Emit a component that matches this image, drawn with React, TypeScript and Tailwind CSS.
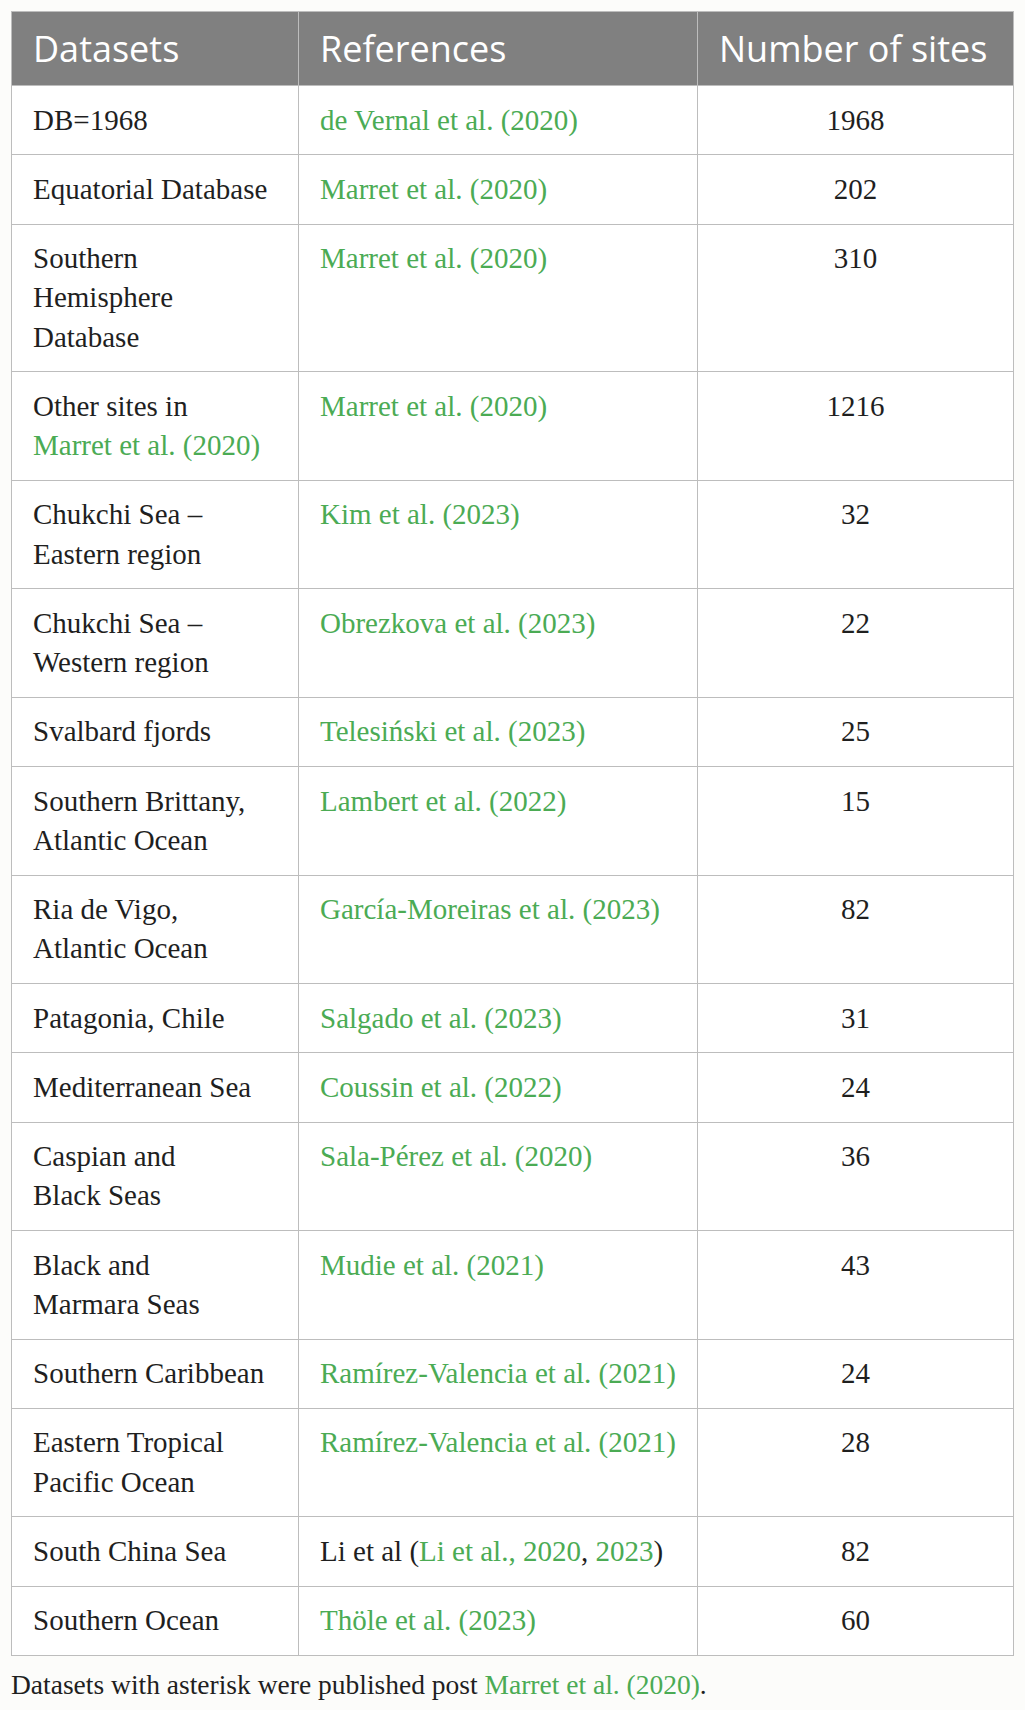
const serif = "font-['Liberation_Serif','Times_New_Roman',serif]";

type Cell = React.ReactNode;

const G = ({ children }: { children: React.ReactNode }) => (
  <span className="text-[#4bab54]">{children}</span>
);

const rows: [Cell, Cell, string][] = [
  ["DB=1968", <G>de Vernal et al. (2020)</G>, "1968"],
  ["Equatorial Database", <G>Marret et al. (2020)</G>, "202"],
  [<>Southern<br />Hemisphere<br />Database</>, <G>Marret et al. (2020)</G>, "310"],
  [<>Other sites in<br /><G>Marret et al. (2020)</G></>, <G>Marret et al. (2020)</G>, "1216"],
  [<>Chukchi Sea –<br />Eastern region</>, <G>Kim et al. (2023)</G>, "32"],
  [<>Chukchi Sea –<br />Western region</>, <G>Obrezkova et al. (2023)</G>, "22"],
  ["Svalbard fjords", <G>Telesiński et al. (2023)</G>, "25"],
  [<>Southern Brittany,<br />Atlantic Ocean</>, <G>Lambert et al. (2022)</G>, "15"],
  [<>Ria de Vigo,<br />Atlantic Ocean</>, <G>García-Moreiras et al. (2023)</G>, "82"],
  ["Patagonia, Chile", <G>Salgado et al. (2023)</G>, "31"],
  ["Mediterranean Sea", <G>Coussin et al. (2022)</G>, "24"],
  [<>Caspian and<br />Black Seas</>, <G>Sala-Pérez et al. (2020)</G>, "36"],
  [<>Black and<br />Marmara Seas</>, <G>Mudie et al. (2021)</G>, "43"],
  ["Southern Caribbean", <G>Ramírez-Valencia et al. (2021)</G>, "24"],
  [<>Eastern Tropical<br />Pacific Ocean</>, <G>Ramírez-Valencia et al. (2021)</G>, "28"],
  ["South China Sea", <>Li et al (<G>Li et al., 2020</G>, <G>2023</G>)</>, "82"],
  ["Southern Ocean", <G>Thöle et al. (2023)</G>, "60"],
];

export default function App() {
  return (
    <div className="min-h-[1710px] w-full bg-[#fcfcfa] px-[11px] pt-[11px]">
      <table className="w-[1002px] table-fixed border-collapse">
        <colgroup>
          <col className="w-[287px]" />
          <col className="w-[399px]" />
          <col className="w-[316px]" />
        </colgroup>
        <thead>
          <tr className="bg-[#808080] text-white font-['Open_Sans',sans-serif] text-[36px] leading-[43px]">
            <th className="border border-[#bdbdbd] px-[21px] py-[15px] text-left font-normal">Datasets</th>
            <th className="border border-[#bdbdbd] px-[21px] py-[15px] text-left font-normal">References</th>
            <th className="border border-[#bdbdbd] px-[21px] py-[15px] text-left font-normal whitespace-nowrap">Number of sites</th>
          </tr>
        </thead>
        <tbody className={`${serif} text-[29px] leading-[39.25px] text-[#1f1f1f] bg-white`}>
          {rows.map(([a, b, c], i) => (
            <tr key={i}>
              <td className="border border-[#bdbdbd] px-[21px] py-[14.5px] align-top">{a}</td>
              <td className="border border-[#bdbdbd] px-[21px] py-[14.5px] align-top whitespace-nowrap">{b}</td>
              <td className="border border-[#bdbdbd] px-[21px] py-[14.5px] align-top text-center">{c}</td>
            </tr>
          ))}
        </tbody>
      </table>
      <p className={`${serif} text-[27.5px] leading-[39px] text-[#1f1f1f] pt-[9px]`}>
        Datasets with asterisk were published post <G>Marret et al. (2020)</G>.
      </p>
    </div>
  );
}
